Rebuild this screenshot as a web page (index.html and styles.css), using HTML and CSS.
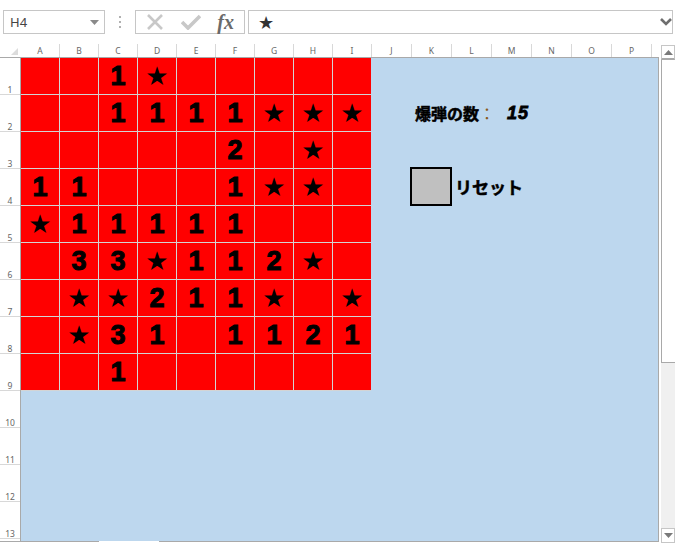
FILE: index.html
```html
<!DOCTYPE html>
<html lang="ja">
<head>
    <meta charset="UTF-8">
    <meta name="viewport" content="width=device-width, initial-scale=1.0">
    <title>マインスイーパー</title>
    <link rel="stylesheet" href="styles.css">
</head>
<body>
    <div class="window">
        <div class="toolbar">
            <div class="name-box">
                <span>H4</span>
                <svg class="arrow" width="9" height="5" viewBox="0 0 9 5"><path d="M0 0H9L4.5 5Z" fill="#8a8a8a"/></svg>
            </div>
            <div class="dots"><i></i><i></i><i></i></div>
            <div class="fx-box">
                <svg width="18" height="16" viewBox="0 0 18 16"><path d="M2 1L16 15M16 1L2 15" stroke="#c8c8c8" stroke-width="2.6" fill="none"/></svg>
                <svg width="20" height="16" viewBox="0 0 20 16"><path d="M1 8L7 14L19 2" stroke="#c8c8c8" stroke-width="3.6" fill="none"/></svg>
                <span class="fx">fx</span>
            </div>
            <div class="formula">
                <span class="formula-star">★</span>
                <svg width="12" height="8" viewBox="0 0 12 8"><path d="M1 1L6 6L11 1" stroke="#6e6e6e" stroke-width="2.6" fill="none"/></svg>
            </div>
        </div>

        <div class="main">
            <div class="grid-area">
                <div class="col-heads">
                    <div class="corner"><svg width="7" height="7" viewBox="0 0 7 7"><path d="M7 0V7H0Z" fill="#dcdcdc"/></svg></div>
                    <div class="col">A</div><div class="col">B</div><div class="col">C</div>
                    <div class="col">D</div><div class="col">E</div><div class="col">F</div>
                    <div class="col">G</div><div class="col">H</div><div class="col">I</div>
                    <div class="col wide">J</div><div class="col wide">K</div><div class="col wide">L</div>
                    <div class="col wide">M</div><div class="col wide">N</div><div class="col wide">O</div>
                    <div class="col wide">P</div>
                </div>
                <div class="body-row">
                    <div class="row-heads">
                        <div class="row">1</div><div class="row">2</div><div class="row">3</div>
                        <div class="row">4</div><div class="row">5</div><div class="row">6</div>
                        <div class="row">7</div><div class="row">8</div><div class="row">9</div>
                        <div class="row">10</div><div class="row">11</div><div class="row">12</div>
                        <div class="row">13</div>
                    </div>
                    <div class="sheet">
                        <div class="board">
                            <div class="cell"></div><div class="cell"></div><div class="cell">1</div><div class="cell star">★</div><div class="cell"></div><div class="cell"></div><div class="cell"></div><div class="cell"></div><div class="cell"></div>
                            <div class="cell"></div><div class="cell"></div><div class="cell">1</div><div class="cell">1</div><div class="cell">1</div><div class="cell">1</div><div class="cell star">★</div><div class="cell star">★</div><div class="cell star">★</div>
                            <div class="cell"></div><div class="cell"></div><div class="cell"></div><div class="cell"></div><div class="cell"></div><div class="cell">2</div><div class="cell"></div><div class="cell star">★</div><div class="cell"></div>
                            <div class="cell">1</div><div class="cell">1</div><div class="cell"></div><div class="cell"></div><div class="cell"></div><div class="cell">1</div><div class="cell star">★</div><div class="cell star">★</div><div class="cell"></div>
                            <div class="cell star">★</div><div class="cell">1</div><div class="cell">1</div><div class="cell">1</div><div class="cell">1</div><div class="cell">1</div><div class="cell"></div><div class="cell"></div><div class="cell"></div>
                            <div class="cell"></div><div class="cell">3</div><div class="cell">3</div><div class="cell star">★</div><div class="cell">1</div><div class="cell">1</div><div class="cell">2</div><div class="cell star">★</div><div class="cell"></div>
                            <div class="cell"></div><div class="cell star">★</div><div class="cell star">★</div><div class="cell">2</div><div class="cell">1</div><div class="cell">1</div><div class="cell star">★</div><div class="cell"></div><div class="cell star">★</div>
                            <div class="cell"></div><div class="cell star">★</div><div class="cell">3</div><div class="cell">1</div><div class="cell"></div><div class="cell">1</div><div class="cell">1</div><div class="cell">2</div><div class="cell">1</div>
                            <div class="cell"></div><div class="cell"></div><div class="cell">1</div><div class="cell"></div><div class="cell"></div><div class="cell"></div><div class="cell"></div><div class="cell"></div><div class="cell"></div>
                        </div>
                        <div class="panel">
                            <div class="count">
                                <span>爆弾の数<span class="colon">：</span></span>
                                <span class="count-value">15</span>
                            </div>
                            <div class="reset">
                                <div class="reset-button"></div>
                                <span>リセット</span>
                            </div>
                        </div>
                    </div>
                </div>
                <div class="tabs"><div class="tab"></div></div>
            </div>

            <div class="scrollbar">
                <div class="scroll-btn"><svg width="9" height="5" viewBox="0 0 9 5"><path d="M4.5 0L9 5H0Z" fill="#7a7a7a"/></svg></div>
                <div class="thumb"></div>
                <div class="track"></div>
                <div class="scroll-btn down"><svg width="9" height="5" viewBox="0 0 9 5"><path d="M0 0H9L4.5 5Z" fill="#7a7a7a"/></svg></div>
            </div>
        </div>
    </div>
</body>
</html>
```

FILE: styles.css
```css
html, body {
    margin: 0;
    padding: 0;
    background: #fff;
    overflow: hidden;
}

.window {
    width: 675px;
    height: 543px;
    font-family: "Noto Sans", sans-serif;
}

/* formula bar */
.toolbar {
    height: 44px;
    box-sizing: border-box;
    padding: 10px 2px 0 3px;
    display: flex;
    align-items: flex-start;
}

.name-box, .fx-box, .formula {
    height: 24px;
    box-sizing: border-box;
    border: 1px solid #c6c6c6;
    display: flex;
    align-items: center;
}

.name-box {
    width: 102px;
    padding: 0 5px 0 6px;
    justify-content: space-between;
    font-size: 13px;
    color: #444;
}

.dots {
    width: 30px;
    height: 24px;
    display: flex;
    flex-direction: column;
    align-items: center;
    justify-content: center;
    gap: 3px;
}

.dots i {
    width: 2px;
    height: 2px;
    background: #b0b0b0;
}

.fx-box {
    width: 110px;
    padding: 0 10px 0 10px;
    justify-content: space-between;
}

.fx {
    font-family: "Liberation Serif", serif;
    font-style: italic;
    font-weight: bold;
    font-size: 20px;
    color: #6a6a6a;
}

.formula {
    width: 425px;
    margin-left: 3px;
    padding: 0 0 0 9px;
    justify-content: space-between;
}

.formula-star {
    font-family: "DejaVu Sans", sans-serif;
    font-size: 18px;
    color: #333;
}

/* headers */
.main {
    display: flex;
}

.grid-area {
    width: 659px;
}

.col-heads {
    height: 13px;
    display: flex;
}

.corner {
    width: 21px;
    padding: 4px 0 0 11px;
    box-sizing: border-box;
    line-height: 0;
}

.col {
    width: 39px;
    box-sizing: border-box;
    border-right: 1px solid #d8d8d8;
    font-size: 8.5px;
    line-height: 13px;
    text-align: center;
    color: #666;
}

.col.wide {
    width: 40px;
}

.body-row {
    height: 484px;
    display: flex;
}

.row-heads {
    width: 21px;
    box-sizing: border-box;
    border-top: 1px solid #a9a9a9;
    border-right: 1px solid #a9a9a9;
}

.row {
    height: 37px;
    box-sizing: border-box;
    border-bottom: 1px solid #d8d8d8;
    display: flex;
    align-items: flex-end;
    justify-content: center;
    font-size: 8.5px;
    line-height: 9px;
    color: #666;
}

/* sheet */
.sheet {
    flex: 1;
    box-sizing: border-box;
    border-top: 1px solid #a9a9a9;
    border-right: 1px solid #a9a9a9;
    background: #bdd7ee;
    display: flex;
    align-items: flex-start;
}

.board {
    display: grid;
    grid-template-columns: repeat(8, 39px) 38px;
    grid-auto-rows: 37px;
    background: #f00;
}

.cell {
    box-sizing: border-box;
    border-right: 1px solid #d4d4d4;
    border-bottom: 1px solid #d4d4d4;
    display: flex;
    align-items: center;
    justify-content: center;
    font-family: "Liberation Sans", sans-serif;
    font-weight: bold;
    font-size: 27px;
    line-height: 36px;
    color: #000;
    -webkit-text-stroke: 1px #000;
}

.cell:nth-child(9n) {
    border-right: none;
}

.cell.star {
    font-family: "DejaVu Sans", sans-serif;
    font-weight: normal;
    font-size: 26px;
    -webkit-text-stroke: 0;
}

.panel {
    flex: 1;
    padding: 43px 0 0 39px;
    font-family: "Noto Sans CJK JP", sans-serif;
    font-weight: bold;
    font-size: 16px;
    color: #000;
    -webkit-text-stroke: 0.5px #000;
}

.colon {
    font-weight: normal;
    color: #8a5a20;
    -webkit-text-stroke: 0;
}

.count {
    margin-left: 5px;
    height: 24px;
    line-height: 24px;
    display: flex;
    gap: 12px;
}

.count-value {
    font-family: "Liberation Sans", sans-serif;
    font-style: italic;
    font-size: 18px;
    letter-spacing: 1px;
    -webkit-text-stroke: 0.8px #000;
}

.reset {
    margin-top: 42px;
    display: flex;
    align-items: center;
    gap: 3px;
    font-size: 17px;
}

.reset-button {
    width: 42px;
    height: 39px;
    box-sizing: border-box;
    border: 2px solid #000;
    background: #c0c0c0;
}

/* sheet tabs */
.tabs {
    height: 2px;
    box-sizing: border-box;
    border-top: 1px solid #a9a9a9;
    padding-left: 99px;
}

.tab {
    width: 60px;
    height: 2px;
    margin-top: -1px;
    background: #fff;
}

/* scrollbar */
.scrollbar {
    width: 14px;
    height: 498px;
    margin: 1px 0 0 2px;
    display: flex;
    flex-direction: column;
    background: #f0f0f0;
}

.scroll-btn {
    height: 15px;
    box-sizing: border-box;
    border: 1px solid #c6c6c6;
    border-bottom: 2px solid #a9a9a9;
    background: #fff;
    display: flex;
    align-items: center;
    justify-content: center;
}

.scroll-btn.down {
    border-bottom: 1px solid #c6c6c6;
}

.thumb {
    height: 303px;
    box-sizing: border-box;
    border-left: 1px solid #a9a9a9;
    border-bottom: 1px solid #a9a9a9;
    background: #fff;
}

.track {
    flex: 1;
}
```
